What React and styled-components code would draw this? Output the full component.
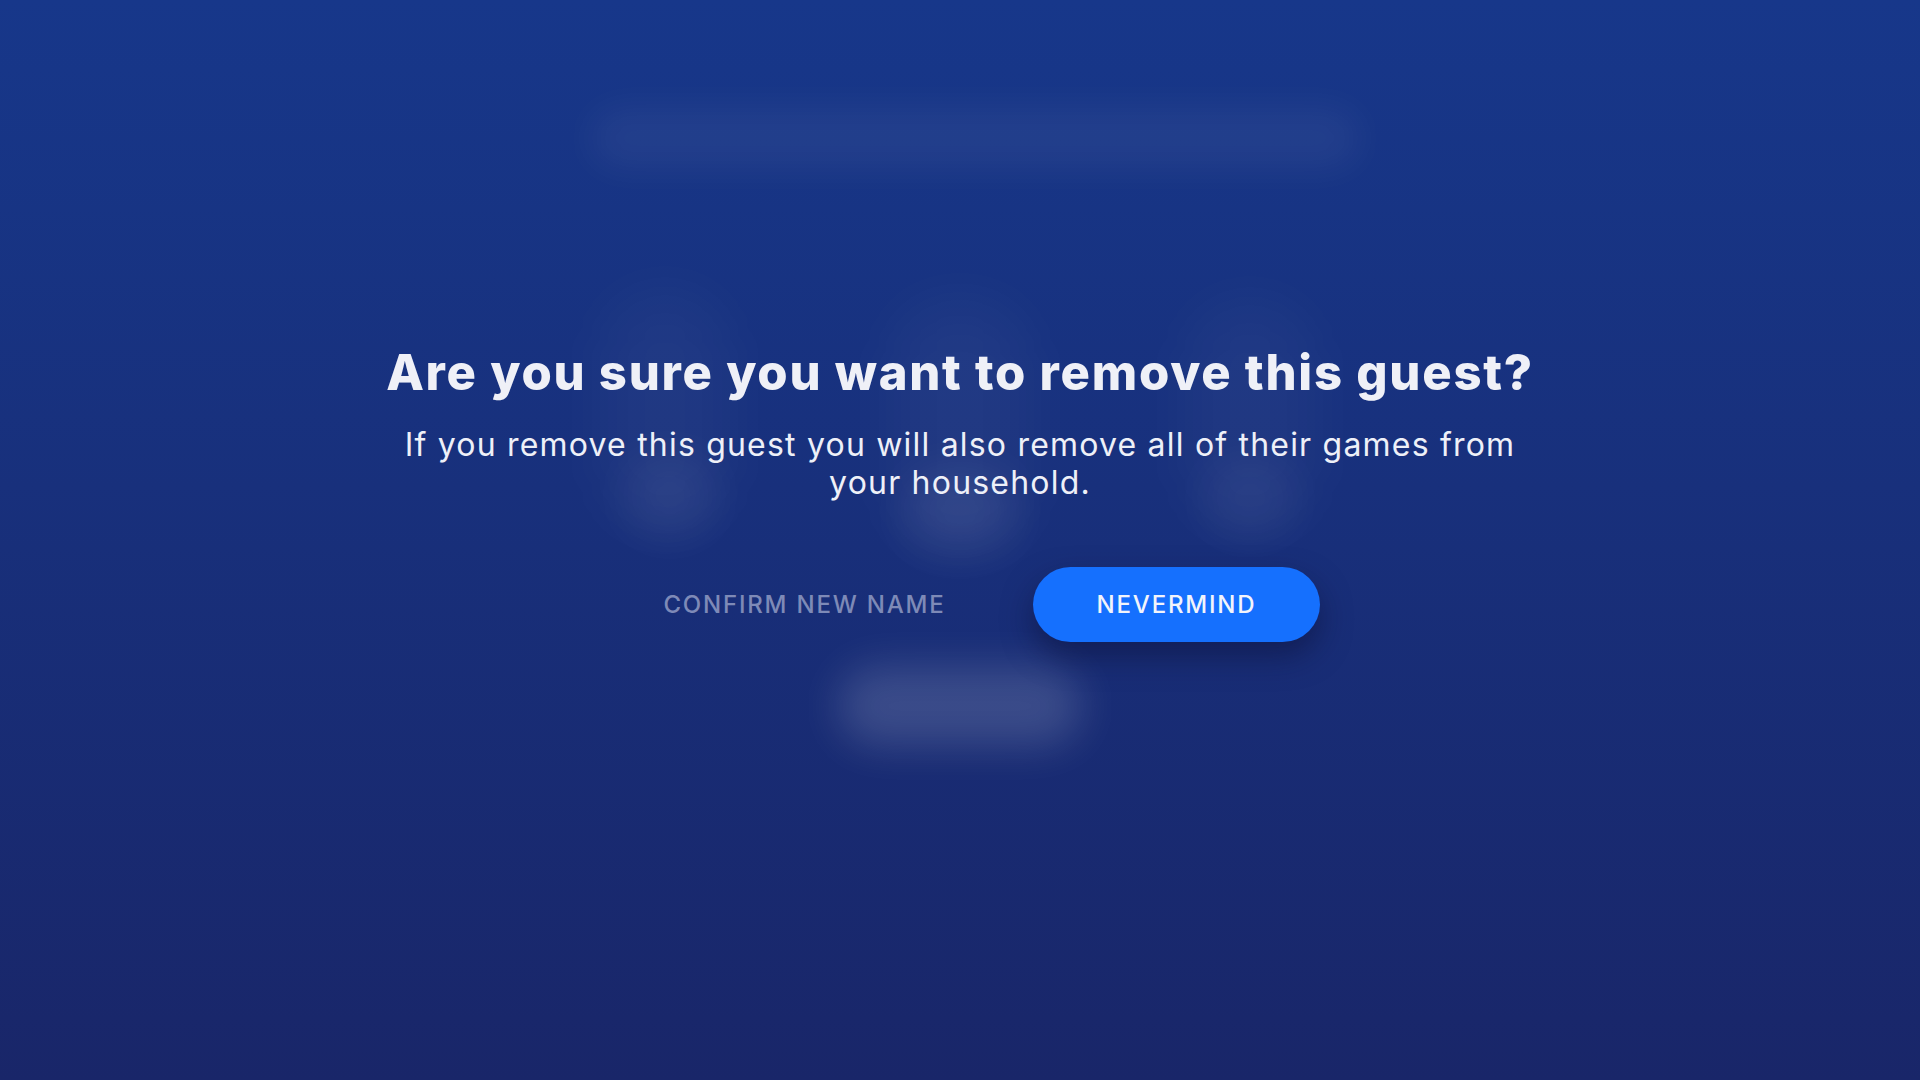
import React from 'react'
import styled, { createGlobalStyle } from 'styled-components'

const GlobalStyle = createGlobalStyle`
  html, body {
    margin: 0;
    padding: 0;
    background: #18296f;
  }
  * { box-sizing: border-box; }
`

// blurred shapes of the screen behind the dialog
const blobs = [
  { x: 590, y: 108, w: 770, h: 60, a: 0.05, r: 30, blur: 18 },
  { x: 600, y: 290, w: 130, h: 240, a: 0.035, r: 60, blur: 30 },
  { x: 890, y: 300, w: 140, h: 250, a: 0.04, r: 60, blur: 30 },
  { x: 1185, y: 300, w: 130, h: 230, a: 0.035, r: 60, blur: 30 },
  { x: 625, y: 455, w: 90, h: 80, a: 0.06, r: 45, blur: 22 },
  { x: 905, y: 470, w: 110, h: 80, a: 0.08, r: 45, blur: 22 },
  { x: 1205, y: 460, w: 90, h: 75, a: 0.05, r: 45, blur: 22 },
  { x: 838, y: 666, w: 244, h: 80, a: 0.15, r: 40, blur: 20 },
]

function ConfirmRemove() {
  return (
    <Screen>
      <Backdrop>
        {blobs.map((b, i) => (
          <Blob
            key={i}
            style={{
              left: b.x,
              top: b.y,
              width: b.w,
              height: b.h,
              borderRadius: b.r,
              background: `rgba(255,255,255,${b.a})`,
              filter: `blur(${b.blur}px)`,
            }}
          />
        ))}
      </Backdrop>

      <Dialog>
        <Title>Are you sure you want to remove this guest?</Title>
        <Message>
          If you remove this guest you will also remove all of their games from
          <br />
          your household.
        </Message>
        <Actions>
          <GhostButton>Confirm new name</GhostButton>
          <PrimaryButton>Nevermind</PrimaryButton>
        </Actions>
      </Dialog>
    </Screen>
  )
}

export default function App() {
  return (
    <>
      <GlobalStyle />
      <ConfirmRemove />
    </>
  )
}

const Screen = styled.div`
  position: relative;
  width: 100vw;
  height: 100vh;
  overflow: hidden;
  background: linear-gradient(180deg, #17378a 0%, #18307c 45%, #192669 100%);
  font-family: Inter, 'Open Sans', sans-serif;
  color: #eef0f8;
`

const Backdrop = styled.div`
  position: absolute;
  inset: 0;
  pointer-events: none;
`

const Blob = styled.div`
  position: absolute;
`

const Dialog = styled.div`
  position: relative;
  display: flex;
  flex-direction: column;
  align-items: center;
  padding-top: 344px;
`

const Title = styled.h1`
  margin: 0;
  font-size: 49px;
  line-height: 58px;
  font-weight: 800;
  letter-spacing: 1.75px;
  text-align: center;
  white-space: nowrap;
  color: #eff0f7;
`

const Message = styled.p`
  margin: 24px 0 0;
  font-size: 32px;
  line-height: 38px;
  font-weight: 400;
  letter-spacing: 1.2px;
  text-align: center;
  color: #eef0f8;
`

const Actions = styled.div`
  display: flex;
  align-items: center;
  gap: 85px;
  margin-top: 65px;
  padding-left: 61px;
`

const PillButton = styled.button`
  width: 287px;
  height: 75px;
  padding: 0;
  border: none;
  border-radius: 38px;
  font-family: Inter, 'Open Sans', sans-serif;
  font-size: 24px;
  font-weight: 500;
  letter-spacing: 1.8px;
  text-transform: uppercase;
  white-space: nowrap;
  cursor: pointer;
`

const GhostButton = styled(PillButton)`
  background: transparent;
  color: #7e8ab7;
`

const PrimaryButton = styled(PillButton)`
  background: #1570fe;
  color: #f2f4fb;
  box-shadow: 0 14px 30px rgba(12, 18, 60, 0.55);
`
